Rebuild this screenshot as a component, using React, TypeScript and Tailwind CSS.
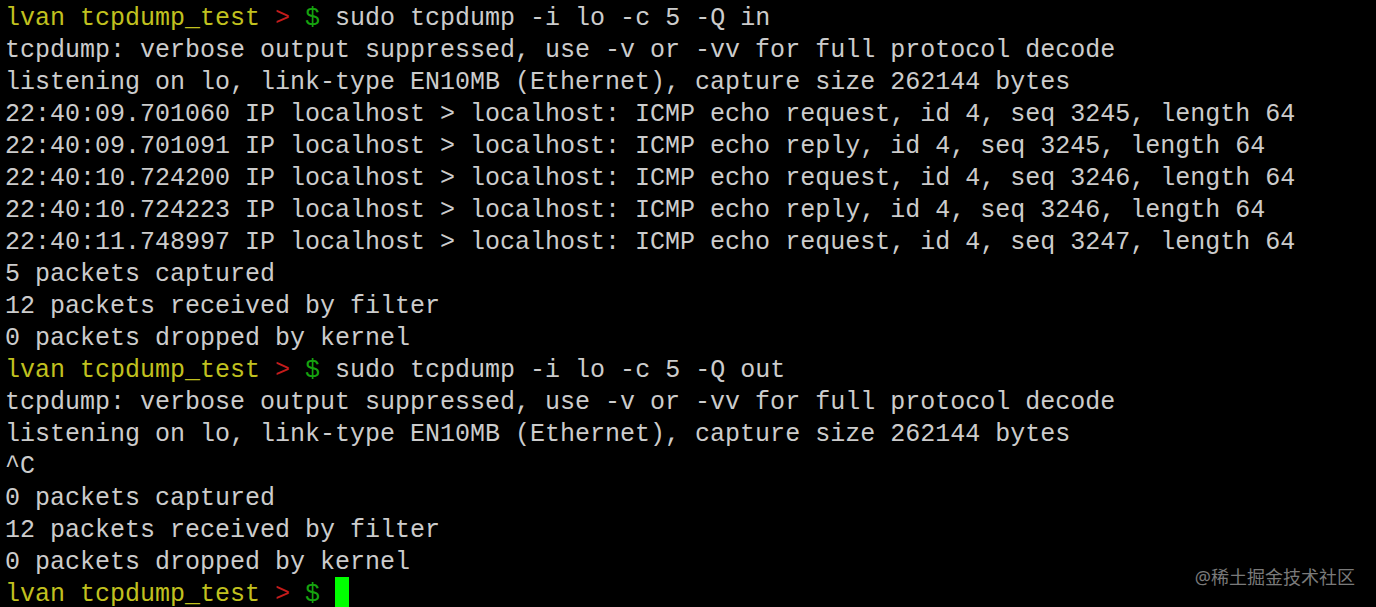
import React from 'react';

const Prompt = ({ cmd, cursor }: { cmd?: string; cursor?: boolean }) => (
    <div className="whitespace-pre">
        <span className="text-[#c1c11f]">lvan tcpdump_test </span>
        <span className="text-[#c31c1c]">&gt; </span>
        <span className="text-[#16a30f]">$ </span>
        {cmd && <span>{cmd}</span>}
        {cursor && <span className="inline-block w-[14px] h-[30px] bg-[#00ff00] align-middle -mt-[4px]" />}
    </div>
);

const Line = ({ text }: { text: string }) => <div className="whitespace-pre">{text}</div>;

const firstRun = [
    'tcpdump: verbose output suppressed, use -v or -vv for full protocol decode',
    'listening on lo, link-type EN10MB (Ethernet), capture size 262144 bytes',
    '22:40:09.701060 IP localhost > localhost: ICMP echo request, id 4, seq 3245, length 64',
    '22:40:09.701091 IP localhost > localhost: ICMP echo reply, id 4, seq 3245, length 64',
    '22:40:10.724200 IP localhost > localhost: ICMP echo request, id 4, seq 3246, length 64',
    '22:40:10.724223 IP localhost > localhost: ICMP echo reply, id 4, seq 3246, length 64',
    '22:40:11.748997 IP localhost > localhost: ICMP echo request, id 4, seq 3247, length 64',
    '5 packets captured',
    '12 packets received by filter',
    '0 packets dropped by kernel',
];

const secondRun = [
    'tcpdump: verbose output suppressed, use -v or -vv for full protocol decode',
    'listening on lo, link-type EN10MB (Ethernet), capture size 262144 bytes',
    '^C',
    '0 packets captured',
    '12 packets received by filter',
    '0 packets dropped by kernel',
];

export default function App() {
    return (
        <div className="relative w-[1376px] h-[607px] overflow-hidden bg-black text-[#cccccc] font-['Liberation_Mono',monospace] text-[25px] leading-[32px] pt-[3px] pl-[5px]">
            <Prompt cmd="sudo tcpdump -i lo -c 5 -Q in" />
            {firstRun.map((t, i) => <Line key={'a' + i} text={t} />)}
            <Prompt cmd="sudo tcpdump -i lo -c 5 -Q out" />
            {secondRun.map((t, i) => <Line key={'b' + i} text={t} />)}
            <Prompt cursor />

            {/* watermark */}
            <div className="absolute right-[21px] bottom-[19px] text-[18px] leading-[22px] text-[#7a7a7a] font-['Noto_Sans','Noto_Sans_CJK_SC',sans-serif]">
                @稀土掘金技术社区
            </div>
        </div>
    );
}
